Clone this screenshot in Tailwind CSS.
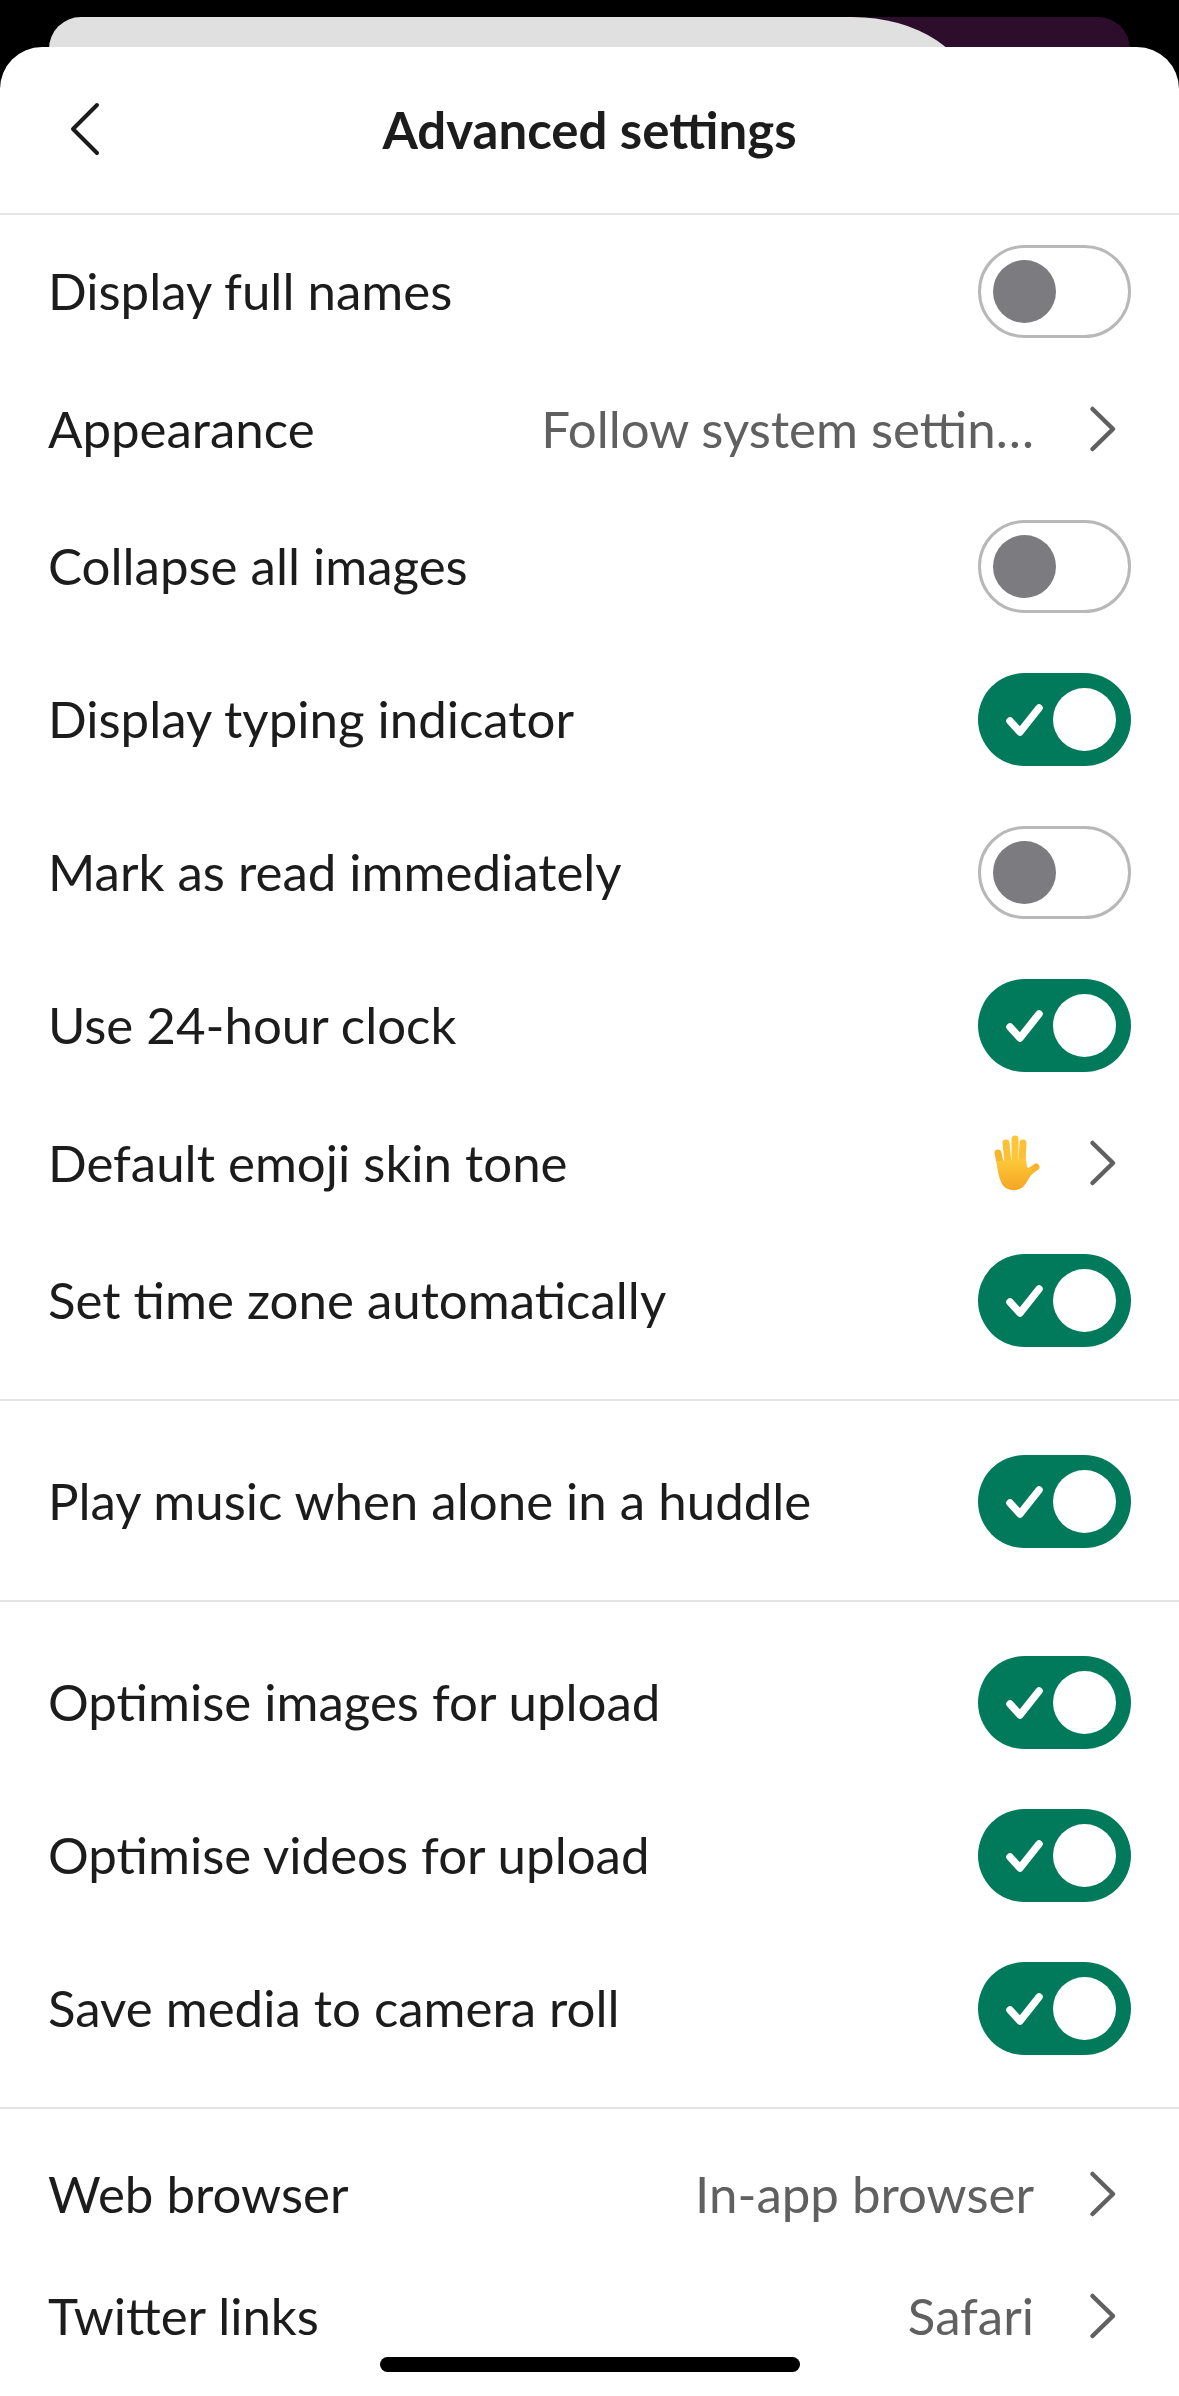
<!DOCTYPE html>
<html lang="en">
<head>
  <meta charset="UTF-8">
  <meta name="viewport" content="width=device-width, initial-scale=1.0">
  <title>Advanced settings</title>
  <script src="https://cdn.jsdelivr.net/npm/@tailwindcss/browser@4"></script>
</head>
<body class="bg-black">
  <div class="relative w-[1179px] h-[2396px] overflow-hidden bg-black font-['Lato',sans-serif] text-[#1d1c1d]">
    <!-- Card stack behind the sheet -->
    <div class="absolute left-[49px] top-[17px] w-[1081px] h-[60px] rounded-t-[32px] bg-[#2c0d2b] overflow-hidden">
      <div class="w-[923px] h-[90px] bg-[#e0e0e0] rounded-tr-[120px_80px]"></div>
    </div>

    <!-- Sheet -->
    <div class="absolute inset-x-0 top-[47px] bottom-0 bg-white rounded-t-[42px]">
      <!-- Header -->
      <div class="relative h-[168px] flex items-center justify-center border-b-2 border-[#e4e4e4]">
        <svg class="absolute left-[68px] top-[54px]" width="34" height="56" viewBox="0 0 34 56" fill="none" stroke="#1d1c1d" stroke-width="4" stroke-linecap="round" stroke-linejoin="round"><path d="M29 4 L5 28 L29 52"/></svg>
        <h1 class="text-[51px] leading-none font-bold -mt-[2px]">Advanced settings</h1>
      </div>

      <!-- Section 1 -->
      <div class="pb-[22px] border-b-2 border-[#e4e4e4]">
        <div class="h-[153px] pl-[48px] pr-[48px] flex items-center justify-between">
          <span class="text-[51px]">Display full names</span>
          <div class="w-[153px] h-[93px] rounded-full border-[3px] border-[#b8b8b8] bg-white flex items-center pl-[12px]"><div class="w-[63px] h-[63px] rounded-full bg-[#7c7c80]"></div></div>
        </div>
        <div class="h-[122px] pl-[48px] pr-[61px] flex items-center">
          <span class="text-[51px]">Appearance</span>
          <span class="ml-auto text-[51px] text-[#616061]">Follow system settin…</span>
          <svg class="ml-[54px]" width="30" height="48" viewBox="0 0 30 48" fill="none" stroke="#616061" stroke-width="4.5" stroke-linecap="round" stroke-linejoin="round"><path d="M4.5 4 L25 24 L4.5 44"/></svg>
        </div>
        <div class="h-[153px] pl-[48px] pr-[48px] flex items-center justify-between">
          <span class="text-[51px]">Collapse all images</span>
          <div class="w-[153px] h-[93px] rounded-full border-[3px] border-[#b8b8b8] bg-white flex items-center pl-[12px]"><div class="w-[63px] h-[63px] rounded-full bg-[#7c7c80]"></div></div>
        </div>
        <div class="h-[153px] pl-[48px] pr-[48px] flex items-center justify-between">
          <span class="text-[51px]">Display typing indicator</span>
          <div class="w-[153px] h-[93px] rounded-full bg-[#007a5a] flex items-center justify-end pr-[15px]">
            <svg class="mr-[9px]" width="38" height="34" viewBox="0 0 38 34" fill="none" stroke="#fff" stroke-width="7.5" stroke-linecap="round" stroke-linejoin="round"><path d="M4 18 L14 29 L33 5"/></svg>
            <div class="w-[63px] h-[63px] rounded-full bg-white"></div>
          </div>
        </div>
        <div class="h-[153px] pl-[48px] pr-[48px] flex items-center justify-between">
          <span class="text-[51px]">Mark as read immediately</span>
          <div class="w-[153px] h-[93px] rounded-full border-[3px] border-[#b8b8b8] bg-white flex items-center pl-[12px]"><div class="w-[63px] h-[63px] rounded-full bg-[#7c7c80]"></div></div>
        </div>
        <div class="h-[153px] pl-[48px] pr-[48px] flex items-center justify-between">
          <span class="text-[51px]">Use 24-hour clock</span>
          <div class="w-[153px] h-[93px] rounded-full bg-[#007a5a] flex items-center justify-end pr-[15px]">
            <svg class="mr-[9px]" width="38" height="34" viewBox="0 0 38 34" fill="none" stroke="#fff" stroke-width="7.5" stroke-linecap="round" stroke-linejoin="round"><path d="M4 18 L14 29 L33 5"/></svg>
            <div class="w-[63px] h-[63px] rounded-full bg-white"></div>
          </div>
        </div>
        <div class="h-[122px] pl-[48px] pr-[61px] flex items-center">
          <span class="text-[51px]">Default emoji skin tone</span>
          <!-- raised hand -->
          <svg class="ml-auto" width="48" height="56" viewBox="0 0 48 56">
            <defs><linearGradient id="hand" x1="0" y1="0" x2="0" y2="1"><stop offset="0" stop-color="#fdc93a"/><stop offset="1" stop-color="#f5a623"/></linearGradient></defs>
            <g fill="none" stroke-linecap="round">
              <path stroke="#f7b52c" stroke-width="7" d="M5 18 L8 32"/>
              <path stroke="#fbc136" stroke-width="7" d="M13 8 L15 28"/>
              <path stroke="#fcc638" stroke-width="7" d="M22 4 L22 28"/>
              <path stroke="#fbc136" stroke-width="7" d="M30 8 L29 28"/>
              <path stroke="#f7b52c" stroke-width="7" d="M43 32 L36 37"/>
            </g>
            <path fill="url(#hand)" d="M4 26 L33 24 C34 30 33 34 38 33 L40 38 C36 42 34 48 30 52 C24 57 13 56 9 49 C6 43 4 34 4 26 Z"/>
          </svg>
          <svg class="ml-[47px]" width="30" height="48" viewBox="0 0 30 48" fill="none" stroke="#616061" stroke-width="4.5" stroke-linecap="round" stroke-linejoin="round"><path d="M4.5 4 L25 24 L4.5 44"/></svg>
        </div>
        <div class="h-[153px] pl-[48px] pr-[48px] flex items-center justify-between">
          <span class="text-[51px]">Set time zone automatically</span>
          <div class="w-[153px] h-[93px] rounded-full bg-[#007a5a] flex items-center justify-end pr-[15px]">
            <svg class="mr-[9px]" width="38" height="34" viewBox="0 0 38 34" fill="none" stroke="#fff" stroke-width="7.5" stroke-linecap="round" stroke-linejoin="round"><path d="M4 18 L14 29 L33 5"/></svg>
            <div class="w-[63px] h-[63px] rounded-full bg-white"></div>
          </div>
        </div>
      </div>

      <!-- Section 2 -->
      <div class="pt-[24px] pb-[22px] border-b-2 border-[#e4e4e4]">
        <div class="h-[153px] pl-[48px] pr-[48px] flex items-center justify-between">
          <span class="text-[51px]">Play music when alone in a huddle</span>
          <div class="w-[153px] h-[93px] rounded-full bg-[#007a5a] flex items-center justify-end pr-[15px]">
            <svg class="mr-[9px]" width="38" height="34" viewBox="0 0 38 34" fill="none" stroke="#fff" stroke-width="7.5" stroke-linecap="round" stroke-linejoin="round"><path d="M4 18 L14 29 L33 5"/></svg>
            <div class="w-[63px] h-[63px] rounded-full bg-white"></div>
          </div>
        </div>
      </div>

      <!-- Section 3 -->
      <div class="pt-[24px] pb-[22px] border-b-2 border-[#e4e4e4]">
        <div class="h-[153px] pl-[48px] pr-[48px] flex items-center justify-between">
          <span class="text-[51px]">Optimise images for upload</span>
          <div class="w-[153px] h-[93px] rounded-full bg-[#007a5a] flex items-center justify-end pr-[15px]">
            <svg class="mr-[9px]" width="38" height="34" viewBox="0 0 38 34" fill="none" stroke="#fff" stroke-width="7.5" stroke-linecap="round" stroke-linejoin="round"><path d="M4 18 L14 29 L33 5"/></svg>
            <div class="w-[63px] h-[63px] rounded-full bg-white"></div>
          </div>
        </div>
        <div class="h-[153px] pl-[48px] pr-[48px] flex items-center justify-between">
          <span class="text-[51px]">Optimise videos for upload</span>
          <div class="w-[153px] h-[93px] rounded-full bg-[#007a5a] flex items-center justify-end pr-[15px]">
            <svg class="mr-[9px]" width="38" height="34" viewBox="0 0 38 34" fill="none" stroke="#fff" stroke-width="7.5" stroke-linecap="round" stroke-linejoin="round"><path d="M4 18 L14 29 L33 5"/></svg>
            <div class="w-[63px] h-[63px] rounded-full bg-white"></div>
          </div>
        </div>
        <div class="h-[153px] pl-[48px] pr-[48px] flex items-center justify-between">
          <span class="text-[51px]">Save media to camera roll</span>
          <div class="w-[153px] h-[93px] rounded-full bg-[#007a5a] flex items-center justify-end pr-[15px]">
            <svg class="mr-[9px]" width="38" height="34" viewBox="0 0 38 34" fill="none" stroke="#fff" stroke-width="7.5" stroke-linecap="round" stroke-linejoin="round"><path d="M4 18 L14 29 L33 5"/></svg>
            <div class="w-[63px] h-[63px] rounded-full bg-white"></div>
          </div>
        </div>
      </div>

      <!-- Section 4 -->
      <div class="pt-[24px]">
        <div class="h-[122px] pl-[48px] pr-[61px] flex items-center">
          <span class="text-[51px]">Web browser</span>
          <span class="ml-auto text-[51px] text-[#616061]">In-app browser</span>
          <svg class="ml-[54px]" width="30" height="48" viewBox="0 0 30 48" fill="none" stroke="#616061" stroke-width="4.5" stroke-linecap="round" stroke-linejoin="round"><path d="M4.5 4 L25 24 L4.5 44"/></svg>
        </div>
        <div class="h-[122px] pl-[48px] pr-[61px] flex items-center">
          <span class="text-[51px]">Twitter links</span>
          <span class="ml-auto text-[51px] text-[#616061]">Safari</span>
          <svg class="ml-[54px]" width="30" height="48" viewBox="0 0 30 48" fill="none" stroke="#616061" stroke-width="4.5" stroke-linecap="round" stroke-linejoin="round"><path d="M4.5 4 L25 24 L4.5 44"/></svg>
        </div>
      </div>
    </div>

    <!-- Home indicator -->
    <div class="absolute left-[380px] top-[2357px] w-[420px] h-[15px] rounded-full bg-black"></div>
  </div>
</body>
</html>
